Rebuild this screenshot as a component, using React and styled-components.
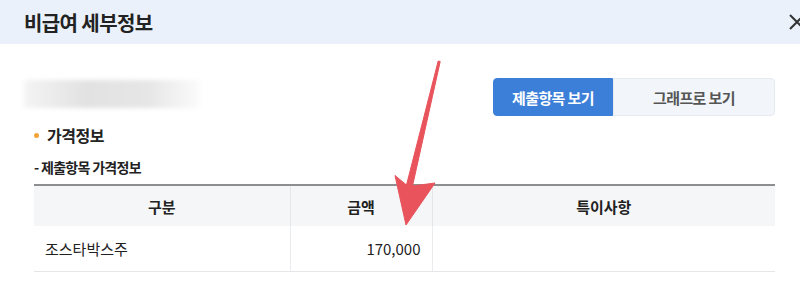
import React from 'react';
import styled, { createGlobalStyle } from 'styled-components';

const GlobalStyle = createGlobalStyle`
  html, body {
    margin: 0;
    padding: 0;
    background: #fff;
  }
  body {
    font-family: "Noto Sans CJK KR", "Noto Sans", sans-serif;
    color: #222;
  }
`;

const Modal = styled.div`
  position: relative;
  width: 800px;
  height: 289px;
  overflow: hidden;
  background: #fff;
`;

const Header = styled.header`
  display: flex;
  align-items: center;
  justify-content: space-between;
  height: 44px;
  padding: 0 0 0 24px;
  background: #eaf1fb;
  box-sizing: border-box;
`;

const Title = styled.h1`
  margin: 0;
  font-size: 20px;
  font-weight: 700;
  color: #222;
  letter-spacing: -0.6px;
`;

const CloseButton = styled.button`
  display: flex;
  align-items: center;
  border: none;
  background: none;
  padding: 0;
  margin-right: -8px;
  color: #333;
  cursor: pointer;
`;

const Body = styled.div`
  padding: 34px 25px 0 24px;
`;

const TopRow = styled.div`
  display: flex;
  justify-content: space-between;
  align-items: flex-start;
`;

const BlurBar = styled.div`
  width: 176px;
  height: 28px;
  margin-top: 2px;
  background: linear-gradient(90deg, #f4f4f4 0%, #e2e2e2 35%, #e6e6e6 70%, #fbfbfb 100%);
  filter: blur(2px);
`;

const Toggle = styled.div`
  display: flex;
`;

const ToggleButton = styled.button`
  height: 38px;
  width: ${(p) => (p.$active ? '120px' : '162px')};
  border: 1px solid ${(p) => (p.$active ? '#3b7fd8' : '#e6ebf1')};
  border-radius: ${(p) => (p.$active ? '4px 0 0 4px' : '0 4px 4px 0')};
  background: ${(p) => (p.$active ? '#3b7fd8' : '#f2f5f9')};
  color: ${(p) => (p.$active ? '#fff' : '#555')};
  font-family: inherit;
  font-size: 15px;
  font-weight: 700;
  letter-spacing: -0.6px;
  padding: 0;
`;

const Section = styled.div`
  padding-left: 10px;
  margin-top: 7px;
`;

const SectionTitle = styled.h2`
  display: flex;
  align-items: center;
  gap: 8px;
  margin: 0;
  font-size: 16px;
  font-weight: 700;
  letter-spacing: -0.5px;

  &::before {
    content: '';
    width: 5px;
    height: 5px;
    border-radius: 50%;
    background: #f2a33a;
  }
`;

const SubTitle = styled.h3`
  margin: 10px 0 7px;
  font-size: 14px;
  font-weight: 700;
  letter-spacing: -0.7px;
  color: #222;
`;

const Table = styled.table`
  width: 741px;
  border-collapse: collapse;
  border-top: 2px solid #8e8e8e;
  font-size: 15px;
  table-layout: fixed;
`;

const Th = styled.th`
  height: 40px;
  padding: 0;
  background: #f5f6f8;
  font-weight: 700;
  color: #222;
  border-left: 1px solid #e4e6ea;
  &:first-child {
    border-left: none;
  }
`;

const Td = styled.td`
  height: 45px;
  padding: 0 11px;
  text-align: ${(p) => (p.$right ? 'right' : 'left')};
  border-left: 1px solid #e9ebee;
  border-bottom: 1px solid #e4e6ea;
  color: #222;
  &:first-child {
    border-left: none;
  }
`;

const ArrowLayer = styled.svg`
  position: absolute;
  left: 0;
  top: 0;
  pointer-events: none;
`;

function Arrow() {
  return (
    <ArrowLayer width="800" height="289" viewBox="0 0 800 289">
      <path
        d="M438.2 61 L440.2 61.5 L412.5 186 L435 183 L406 225 L395 175.5 L406.5 185 Z"
        fill="#e8535c"
        stroke="#e8535c"
        strokeWidth="1"
        strokeLinejoin="round"
      />
    </ArrowLayer>
  );
}

export default function App() {
  return (
    <>
      <GlobalStyle />
      <Modal>
        <Header>
          <Title>비급여 세부정보</Title>
          <CloseButton aria-label="닫기">
            <svg width="22" height="22" viewBox="0 0 22 22">
              <path d="M4 4 L18 18 M18 4 L4 18" stroke="#333" strokeWidth="2" />
            </svg>
          </CloseButton>
        </Header>
        <Body>
          <TopRow>
            <BlurBar />
            <Toggle>
              <ToggleButton $active>제출항목 보기</ToggleButton>
              <ToggleButton>그래프로 보기</ToggleButton>
            </Toggle>
          </TopRow>
          <Section>
            <SectionTitle>가격정보</SectionTitle>
            <SubTitle>- 제출항목 가격정보</SubTitle>
            <Table>
              <colgroup>
                <col style={{ width: 256 }} />
                <col style={{ width: 142 }} />
                <col />
              </colgroup>
              <thead>
                <tr>
                  <Th>구분</Th>
                  <Th>금액</Th>
                  <Th>특이사항</Th>
                </tr>
              </thead>
              <tbody>
                <tr>
                  <Td>조스타박스주</Td>
                  <Td $right>170,000</Td>
                  <Td />
                </tr>
              </tbody>
            </Table>
          </Section>
        </Body>
        <Arrow />
      </Modal>
    </>
  );
}
